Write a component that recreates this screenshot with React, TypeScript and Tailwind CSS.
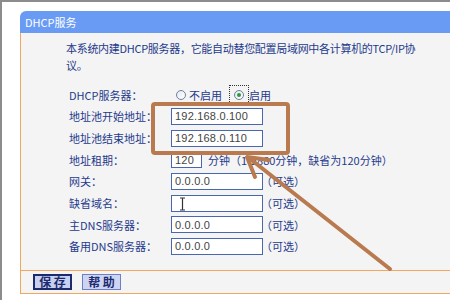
import React from "react";

const rows: { label: string; value?: string; narrow?: boolean; note?: string; cursor?: boolean }[] = [
  { label: "地址池开始地址：", value: "192.168.0.100" },
  { label: "地址池结束地址：", value: "192.168.0.110" },
  { label: "地址租期：", value: "120", narrow: true, note: "分钟（1-2880分钟，缺省为120分钟）" },
  { label: "网关：", value: "0.0.0.0", note: "（可选）" },
  { label: "缺省域名：", value: "", note: "（可选）", cursor: true },
  { label: "主DNS服务器：", value: "0.0.0.0", note: "（可选）" },
  { label: "备用DNS服务器：", value: "0.0.0.0", note: "（可选）" },
];

function Radio({ checked }: { checked?: boolean }) {
  return (
    <span className="flex h-[10px] w-[10px] items-center justify-center rounded-full border border-[#6f7f9f] bg-gradient-to-br from-[#e4e8ee] to-white">
      {checked && <span className="h-[4px] w-[4px] rounded-full bg-[#2f9a3a]" />}
    </span>
  );
}

function TextBox({ value, narrow, cursor }: { value?: string; narrow?: boolean; cursor?: boolean }) {
  return (
    <div
      className={`relative flex h-[17px] items-center border border-[#4966b0] bg-white pl-[3px] font-['Liberation_Sans',sans-serif] text-[11px] tracking-[0.2px] text-[#444] ${
        narrow ? "w-[31px]" : "w-[92px]"
      }`}
    >
      {value}
      {cursor && (
        <svg className="absolute left-[7px] top-[1px]" width="7" height="14" viewBox="0 0 7 14">
          <path d="M1 1h5M3.5 1v12M1 13h5" stroke="#333" strokeWidth="1.2" fill="none" />
        </svg>
      )}
    </div>
  );
}

export default function App() {
  return (
    <div className="relative h-[300px] w-[450px] overflow-hidden border-l-2 border-t-2 border-[#8c8c8c] bg-white font-['Noto_Sans_CJK_SC',sans-serif] text-[11px] text-[#1f3a8c]">
      <div className="ml-[18px] mt-[9px]">
        <div className="flex h-[22px] items-center rounded-tl-[6px] bg-[#6a9bf4] pl-[5px] text-white">DHCP服务</div>
        <div className="border-l border-[#f3a75e] bg-[#f4f4f4]">
          <div className="h-[237px] pt-[7px]">
            <p className="pl-[45px] leading-[17px] tracking-[-0.3px]">
              本系统内建DHCP服务器，它能自动替您配置局域网中各计算机的TCP/IP协
              <br />
              议。
            </p>
            <div className="mt-[10px] pl-[48px]">
              <div className="flex h-[21.7px] items-center">
                <span className="w-[102px]">DHCP服务器：</span>
                <span className="ml-[5px] flex items-center gap-[3px]">
                  <Radio />
                  <span>不启用</span>
                </span>
                <span className="ml-[7px] flex h-[19px] w-[20px] items-center justify-center border border-dotted border-[#333]">
                  <Radio checked />
                </span>
                <span>启用</span>
              </div>
              {rows.map((r) => (
                <div key={r.label} className="flex h-[21.7px] items-center">
                  <span className="w-[102px]">{r.label}</span>
                  <TextBox value={r.value} narrow={r.narrow} cursor={r.cursor} />
                  {r.note && <span className={r.narrow ? "ml-[6px]" : "ml-[-2px]"}>{r.note}</span>}
                </div>
              ))}
            </div>
          </div>
          <div className="flex h-[24px] items-center gap-[10px] border-y border-[#f3a75e] pl-[12px]">
            <button className="flex h-[16px] w-[39px] items-center justify-center border-2 border-[#1c2a6e] bg-[#c9d1f1] text-[12px] font-bold leading-none text-[#1c2a6e]">
              保 存
            </button>
            <button className="flex h-[16px] w-[39px] items-center justify-center border border-[#6d80c6] bg-[#cdd5f3] text-[12px] font-bold leading-none text-[#1c2a6e]">
              帮 助
            </button>
          </div>
        </div>
      </div>

      <svg className="pointer-events-none absolute left-[-2px] top-[-2px]" width="450" height="300" viewBox="0 0 450 300">
        <rect x="153" y="104" width="135" height="49" rx="2" fill="none" stroke="#b97a4f" strokeWidth="4" />
        <line x1="390" y1="269" x2="249" y2="158" stroke="#b97a4f" strokeWidth="4" strokeLinecap="round" />
        <polyline points="255,177 247,157 269,160" fill="none" stroke="#b97a4f" strokeWidth="4" strokeLinecap="round" strokeLinejoin="round" />
      </svg>
    </div>
  );
}
